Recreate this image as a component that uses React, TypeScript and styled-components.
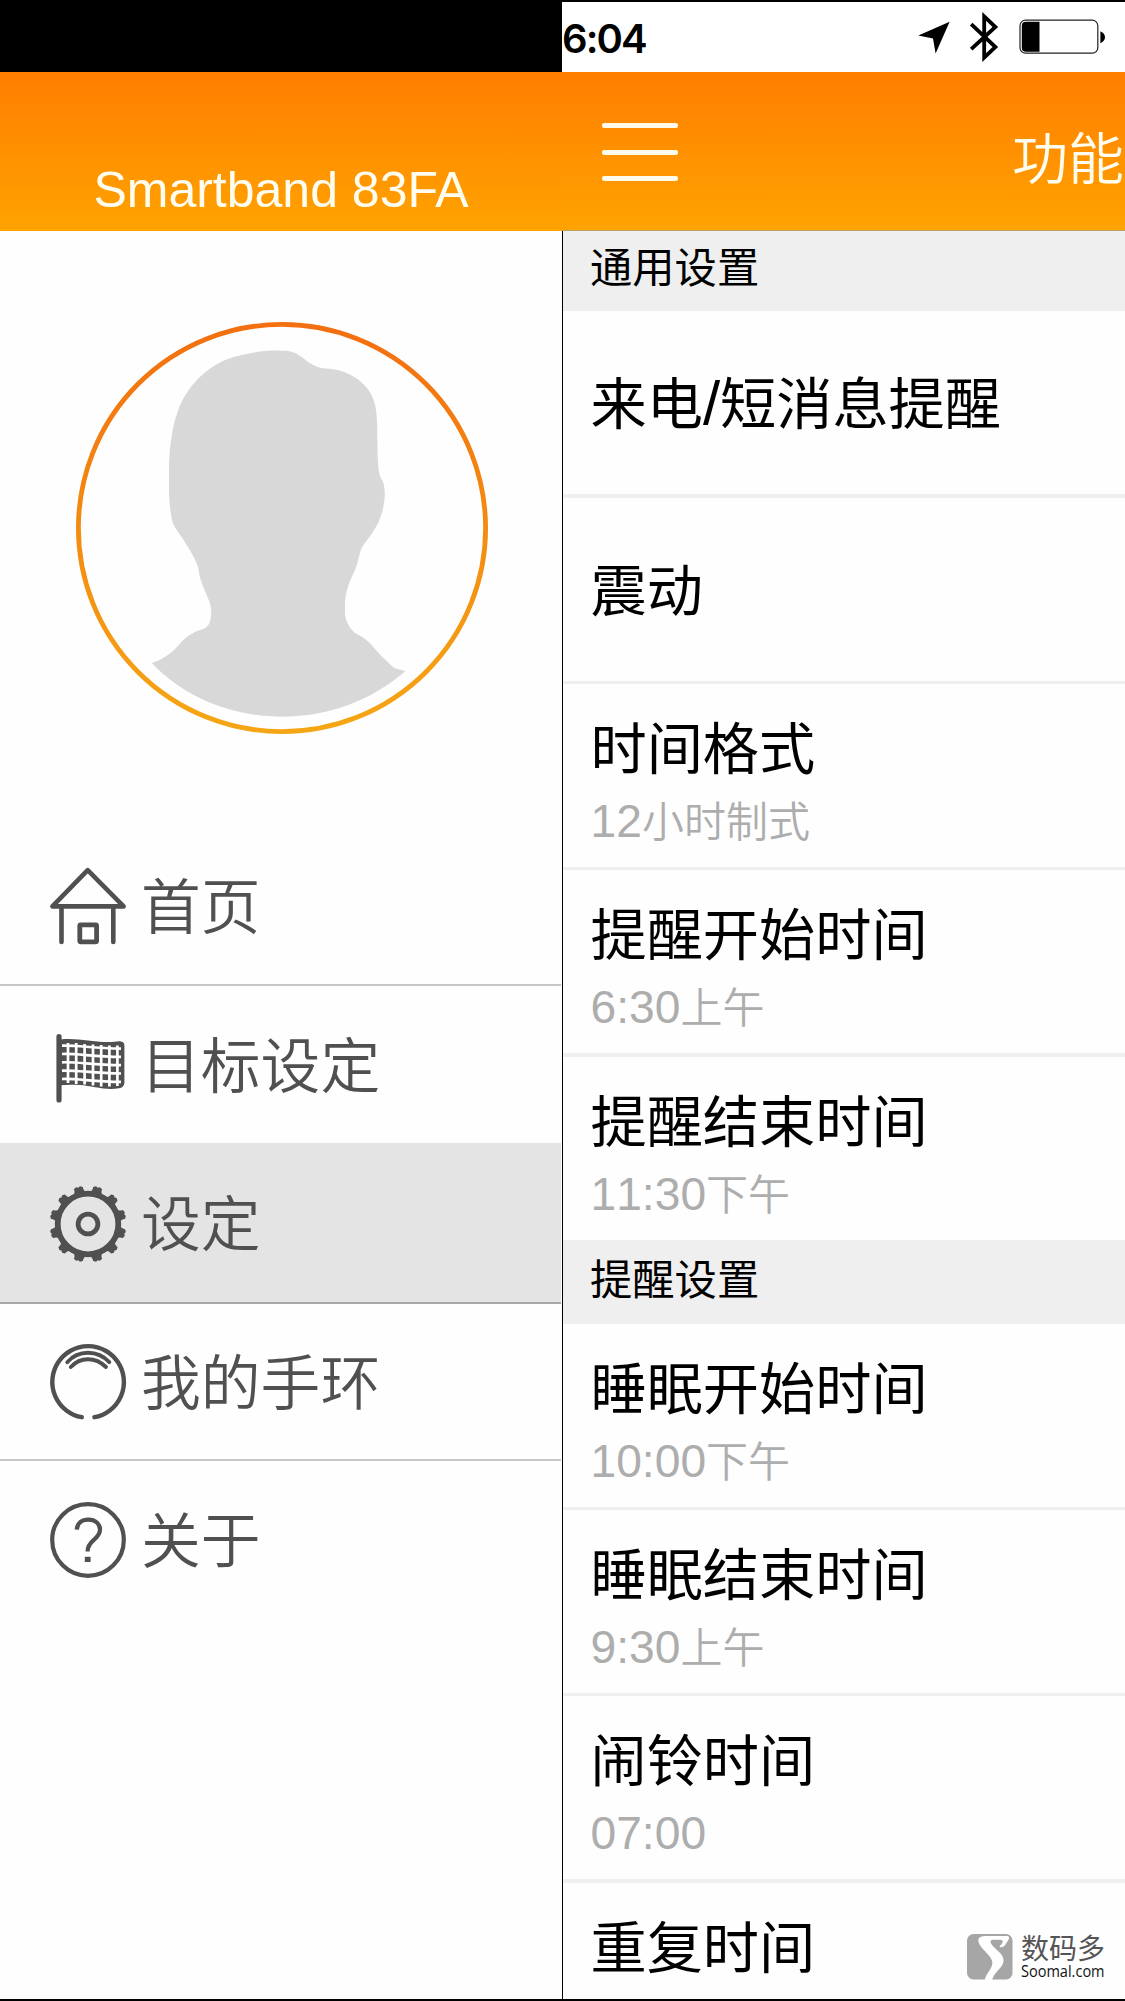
import React from "react";
import styled, { createGlobalStyle } from "styled-components";

const latin = `"Liberation Sans", Arial`;
const cjk = `"Noto Sans CJK SC", sans-serif`;

const GlobalStyle = createGlobalStyle`
  * { box-sizing: border-box; }
  body { margin: 0; background: #fefefe; font-family: ${latin}, ${cjk}; }
`;

const Screen = styled.div`
  position: relative;
  display: grid;
  grid-template-columns: 562px 563px;
  width: 1125px;
  height: 2001px;
  overflow: hidden;
  border-bottom: 2px solid #000;
  background: #fefefe;
`;

const Column = styled.section`
  display: flex;
  flex-direction: column;
  min-width: 0;
  overflow: hidden;
`;

const BlankStatus = styled.div`
  flex: none;
  height: 72px;
  background: #000;
`;

const StatusBar = styled.div`
  flex: none;
  display: flex;
  align-items: center;
  height: 72px;
  padding: 4px 20px 0 0;
  border-top: 2px solid #000;
  background: #fff;
`;

const Clock = styled.span`
  flex: 1;
  font: 600 40px/48px Inter, sans-serif;
  letter-spacing: -1.9px;
  color: #000;
`;

const StatusIcons = styled.svg`
  display: block;
  margin-top: -4px;
`;

const Header = styled.header`
  flex: none;
  display: flex;
  height: 159px;
  color: #fffdf0;
  background: linear-gradient(#ff7e00, #ffa300);
`;

const DeviceHeader = styled(Header)`
  justify-content: center;
  align-items: flex-end;
  padding-bottom: 13px;
`;

const DeviceName = styled.h1`
  margin: 0;
  font: 400 50px/56px ${latin}, sans-serif;
`;

const SettingsHeader = styled(Header)`
  align-items: center;
  justify-content: space-between;
  padding: 3px 1px 0 40px;
  border-bottom: 1px solid #b9a26c;
`;

const MenuButton = styled.button`
  display: flex;
  flex-direction: column;
  justify-content: space-between;
  width: 76px;
  height: 58px;
  margin-top: -1px;
  padding: 0;
  border: 0;
  background: none;
`;

const MenuLine = styled.span`
  height: 5px;
  border-radius: 2px;
  background: #fffbea;
`;

const PageTitle = styled.h2`
  margin: 4px 0 0;
  font: 400 56px/64px ${cjk};
  font-weight: 350;
`;

const AvatarArea = styled.div`
  flex: none;
  height: 597px;
  padding: 91px 0 0 76px;
`;

const NavList = styled.nav`
  display: flex;
  flex-direction: column;
`;

const NavItem = styled.a<{ $height: number; $active?: boolean; $line?: string }>`
  display: flex;
  align-items: center;
  gap: 15px;
  width: 561px;
  height: ${(p) => p.$height}px;
  padding-left: 50px;
  border-bottom: ${(p) => (p.$line ? `2px solid ${p.$line}` : "0")};
  background: ${(p) => (p.$active ? "#e4e4e4" : "transparent")};
  color: #505050;
`;

const NavIcon = styled.svg`
  flex: none;
  width: 76px;
  height: 76px;
  overflow: visible;
  fill: none;
  stroke: #505050;
  stroke-linecap: round;
  stroke-linejoin: round;
`;

const NavLabel = styled.span`
  margin-top: -6px;
  font: 400 59.8px/76px ${cjk};
  font-weight: 350;
`;

const Settings = styled.main`
  flex: 1;
  min-height: 0;
  border-left: 1px solid #000;
`;

const GroupTitle = styled.h3<{ $height: number; $top: number }>`
  height: ${(p) => p.$height}px;
  margin: 0;
  padding: ${(p) => p.$top}px 0 0 27px;
  background: #efefef;
  color: #000;
  font: 400 42.3px/50px ${cjk};
`;

const SettingRow = styled.div<{ $line: number; $single: boolean }>`
  height: ${(p) => 183 + p.$line}px;
  padding: ${(p) => (p.$single ? 53 : 25)}px 0 0 27.5px;
  border-bottom: ${(p) => p.$line}px solid #efefef;
`;

const SettingName = styled.div`
  height: 72px;
  font: 400 56.2px/72px ${cjk};
  color: #000;
  white-space: nowrap;
`;

const SettingValue = styled.div`
  height: 56px;
  margin-top: 10px;
  font: 400 42px/56px ${cjk};
  font-weight: 350;
  color: #adadad;
  white-space: nowrap;
`;

const Latin = styled.span`
  font-family: ${latin}, sans-serif;
  font-size: 1.1em;
  font-kerning: none;
  line-height: 1;
`;

const Watermark = styled.div`
  position: absolute;
  left: 967px;
  top: 1933px;
  display: flex;
  gap: 8px;
`;

const WatermarkText = styled.div`
  display: flex;
  flex-direction: column;
`;

const WatermarkName = styled.span`
  height: 29px;
  font: 400 28px/28px ${cjk};
  color: #555;
`;

const WatermarkSite = styled.span`
  font: 400 16.5px/18px "Open Sans", sans-serif;
  color: #111;
  transform: scaleX(0.88);
  transform-origin: left;
`;

const MixedText = ({ text }: { text: string }) => (
  <>
    {text.split(/([\d:/]+)/).filter(Boolean).map((part, i) =>
      /^[\d:/]/.test(part) ? <Latin key={i}>{part}</Latin> : part
    )}
  </>
);

const HomeIcon = () => (
  <NavIcon viewBox="0 0 76 76" strokeWidth="4.6">
    <path d="M37.7 2.2 L2.4 38.4 H73.6 Z" />
    <path d="M11.5 38.5 V74 M63.3 38.5 V74" />
    <rect x="29.8" y="56.8" width="16.8" height="17" rx="1" strokeWidth="4.8" />
  </NavIcon>
);

const FlagIcon = () => (
  <NavIcon viewBox="0 0 76 76">
    <path
      d="M10 12.4 C28 10.5 40 15 58 15 C63 15 67 14 70 14.2 Q74.4 14.6 74.4 18.5 V56 Q73.8 60.7 69 61.2 C56 63.7 42 58.9 30 58 C22 57.4 16 57.6 10 58.2 Z"
      fill="#505050"
      stroke="none"
    />
    <g stroke="#fefefe" strokeWidth="2.7" strokeLinecap="butt">
      <path d="M18 16 V56 M26.2 16 V57 M34.6 17 V57.5 M43 17.5 V58.5 M51.2 18 V59.5 M59.4 18.5 V59.5 M67.4 18.5 V59" />
      {[18.7, 27, 35.3, 43.6, 52].map((y) => (
        <path key={y} d={`M12 ${y} C28 ${y - 0.6} 42 ${y + 2.6} 71 ${y + 2.9}`} />
      ))}
    </g>
    <path d="M9 9.5 V73" stroke="#505050" strokeWidth="5.2" />
  </NavIcon>
);

const GearIcon = () => (
  <NavIcon viewBox="0 0 76 76">
    <g transform="translate(0 1)">
      <g fill="#505050" stroke="none">
        {Array.from({ length: 12 }, (_, i) => (
          <path
            key={i}
            d="M30.6 8 Q34 4.5 33.4 0.8 L36 -0.6 L38 0.4 L40 -0.6 L42.6 0.8 Q42 4.5 45.4 8 Z"
            transform={`rotate(${15 + i * 30} 38 38)`}
          />
        ))}
      </g>
      <circle cx="38" cy="38" r="30.3" stroke="#505050" strokeWidth="5.8" />
      <circle cx="38" cy="38" r="9.9" stroke="#505050" strokeWidth="4.8" />
    </g>
  </NavIcon>
);

const BandIcon = () => (
  <NavIcon viewBox="0 0 76 76" strokeWidth="4.4">
    <path d="M31.8 73.2 A35.8 35.8 0 1 1 44.4 73.2" />
    <path d="M17.3 18.2 Q25.5 8.8 38 8.8 Q50.5 8.8 59.3 18.2" strokeWidth="3.9" />
    <path d="M20.8 23 Q28 15.2 38 15.2 Q48 15.2 56 23" strokeWidth="3.9" />
  </NavIcon>
);

const AboutIcon = () => (
  <NavIcon viewBox="0 0 76 76" strokeWidth="4.2">
    <circle cx="38" cy="38" r="35.8" />
    <g strokeLinecap="butt">
      <path d="M26.8 27.6 C27.2 21 31.8 17.6 38.4 17.6 C45.5 17.6 50 22 50 27.6 C50 32 47.5 34.8 43.6 38.2 C39.4 41.8 37.6 44.6 37.6 49.4" />
      <path d="M34.8 57.4 H40.6" strokeWidth="5.2" />
    </g>
  </NavIcon>
);

const Avatar = () => (
  <svg width="412" height="412" viewBox="0 0 412 412">
    <defs>
      <linearGradient id="ring" x1="0" y1="0" x2="0" y2="1">
        <stop offset="0" stopColor="#f36f10" />
        <stop offset="1" stopColor="#f5a614" />
      </linearGradient>
    </defs>
    <circle cx="206" cy="206" r="203.6" fill="none" stroke="url(#ring)" strokeWidth="4.8" />
    <path
      fill="#d8d8d8"
      transform="translate(-16 -12) scale(0.33333)"
      d="M660 122 C690 121 708 127 722 139 C742 154 755 166 780 173 C805 177 830 176 852 186 C905 205 938 245 946 288 C955 330 950 400 955 470 C957 490 960 503 968 513 C976 530 976 565 970 590 C962 635 938 670 915 698 C896 722 899 745 885 780 C866 820 856 848 855 880 L855 915 C857 930 868 955 884 968 C915 983 930 998 950 1022 C970 1045 990 1062 1004 1075 L1036 1083 C940 1168 810 1220 667 1220 C520 1220 375 1165 275 1059 C320 1045 345 1018 365 995 C385 975 402 966 428 958 C445 950 449 942 452 925 C456 905 453 890 448 875 C438 845 420 820 415 775 C405 740 385 715 371 690 C358 670 343 652 338 638 C330 605 327 570 327 530 L327 470 C328 420 336 350 353 305 C385 215 460 155 530 139 C575 126 620 121 660 122 Z"
    />
  </svg>
);

const StatusGlyphs = () => (
  <StatusIcons width="188" height="52" viewBox="917 12 188 52">
    <path d="M949.6 22.8 L935.6 54.5 L933 39.6 L918.3 36.4 Z" fill="#000" />
    <path
      d="M971.2 25.2 L995.4 48 L984.2 58.6 V17.4 L995.4 28 L971.2 50.2"
      fill="none"
      stroke="#000"
      strokeWidth="3.8"
    />
    <rect x="1020" y="21.2" width="77.8" height="33" rx="5.5" fill="none" stroke="#222" strokeWidth="1.2" />
    <path d="M1026 22.8 H1039.5 V52.8 H1026 Q1021.8 52.8 1021.8 48.8 V26.8 Q1021.8 22.8 1026 22.8 Z" fill="#000" />
    <path d="M1100.4 32.3 Q1105 34.5 1105 38.3 Q1105 42 1100.4 44.3 Z" fill="#000" />
  </StatusIcons>
);

const SoomalLogo = () => (
  <svg width="46" height="47" viewBox="0 0 46 47">
    <rect x="0" y="1" width="45.5" height="45.5" rx="6.5" fill="#a6a6a6" />
    <path
      fill="#fff"
      d="M12 5 Q14 3 18 3 H40 Q43 3.4 41.6 6.6 L38 12.2 Q36 14.8 32.4 14 L35.6 9.6 Q36.6 7.2 33 6.8 H26 Q22.4 7.2 24 10.4 C27 16 37 20.5 36.6 27.6 C36.2 35 28 38 25 47 H17.6 C20.4 38 27 34.5 25 27.6 C23 21 12.5 15 11.4 8.4 Q11 6.4 12 5 Z"
    />
  </svg>
);

const navItems = [
  { label: "首页", Icon: HomeIcon, height: 158, line: "#c6c6c6" },
  { label: "目标设定", Icon: FlagIcon, height: 157 },
  { label: "设定", Icon: GearIcon, height: 161, line: "#a8a8a8", active: true },
  { label: "我的手环", Icon: BandIcon, height: 157, line: "#c6c6c6" },
  { label: "关于", Icon: AboutIcon, height: 158 },
];

const general = [
  { name: "来电/短消息提醒", line: 4 },
  { name: "震动", line: 3 },
  { name: "时间格式", value: "12小时制式", line: 3 },
  { name: "提醒开始时间", value: "6:30上午", line: 4 },
  { name: "提醒结束时间", value: "11:30下午", line: 0 },
];

const reminders = [
  { name: "睡眠开始时间", value: "10:00下午", line: 3 },
  { name: "睡眠结束时间", value: "9:30上午", line: 3 },
  { name: "闹铃时间", value: "07:00", line: 4 },
];

const Row = ({ name, value, line }: { name: string; value?: string; line: number }) => (
  <SettingRow $line={line} $single={!value}>
    <SettingName>
      <MixedText text={name} />
    </SettingName>
    {value && (
      <SettingValue>
        <MixedText text={value} />
      </SettingValue>
    )}
  </SettingRow>
);

const LastRow = styled.div`
  padding: 25px 0 0 27.5px;
`;

export default function App() {
  return (
    <>
      <GlobalStyle />
      <Screen>
        <Column>
          <BlankStatus />
          <DeviceHeader>
            <DeviceName>Smartband 83FA</DeviceName>
          </DeviceHeader>
          <AvatarArea>
            <Avatar />
          </AvatarArea>
          <NavList>
            {navItems.map(({ label, Icon, height, line, active }) => (
              <NavItem key={label} $height={height} $line={line} $active={active}>
                <Icon />
                <NavLabel>{label}</NavLabel>
              </NavItem>
            ))}
          </NavList>
        </Column>
        <Column>
          <StatusBar>
            <Clock>6:04</Clock>
            <StatusGlyphs />
          </StatusBar>
          <SettingsHeader>
            <MenuButton aria-label="菜单">
              <MenuLine />
              <MenuLine />
              <MenuLine />
            </MenuButton>
            <PageTitle>功能</PageTitle>
          </SettingsHeader>
          <Settings>
            <GroupTitle $height={80} $top={9}>通用设置</GroupTitle>
            {general.map((row) => (
              <Row key={row.name} {...row} />
            ))}
            <GroupTitle $height={84} $top={12}>提醒设置</GroupTitle>
            {reminders.map((row) => (
              <Row key={row.name} {...row} />
            ))}
            <LastRow>
              <SettingName>重复时间</SettingName>
            </LastRow>
          </Settings>
        </Column>
        <Watermark>
          <SoomalLogo />
          <WatermarkText>
            <WatermarkName>数码多</WatermarkName>
            <WatermarkSite>Soomal.com</WatermarkSite>
          </WatermarkText>
        </Watermark>
      </Screen>
    </>
  );
}
